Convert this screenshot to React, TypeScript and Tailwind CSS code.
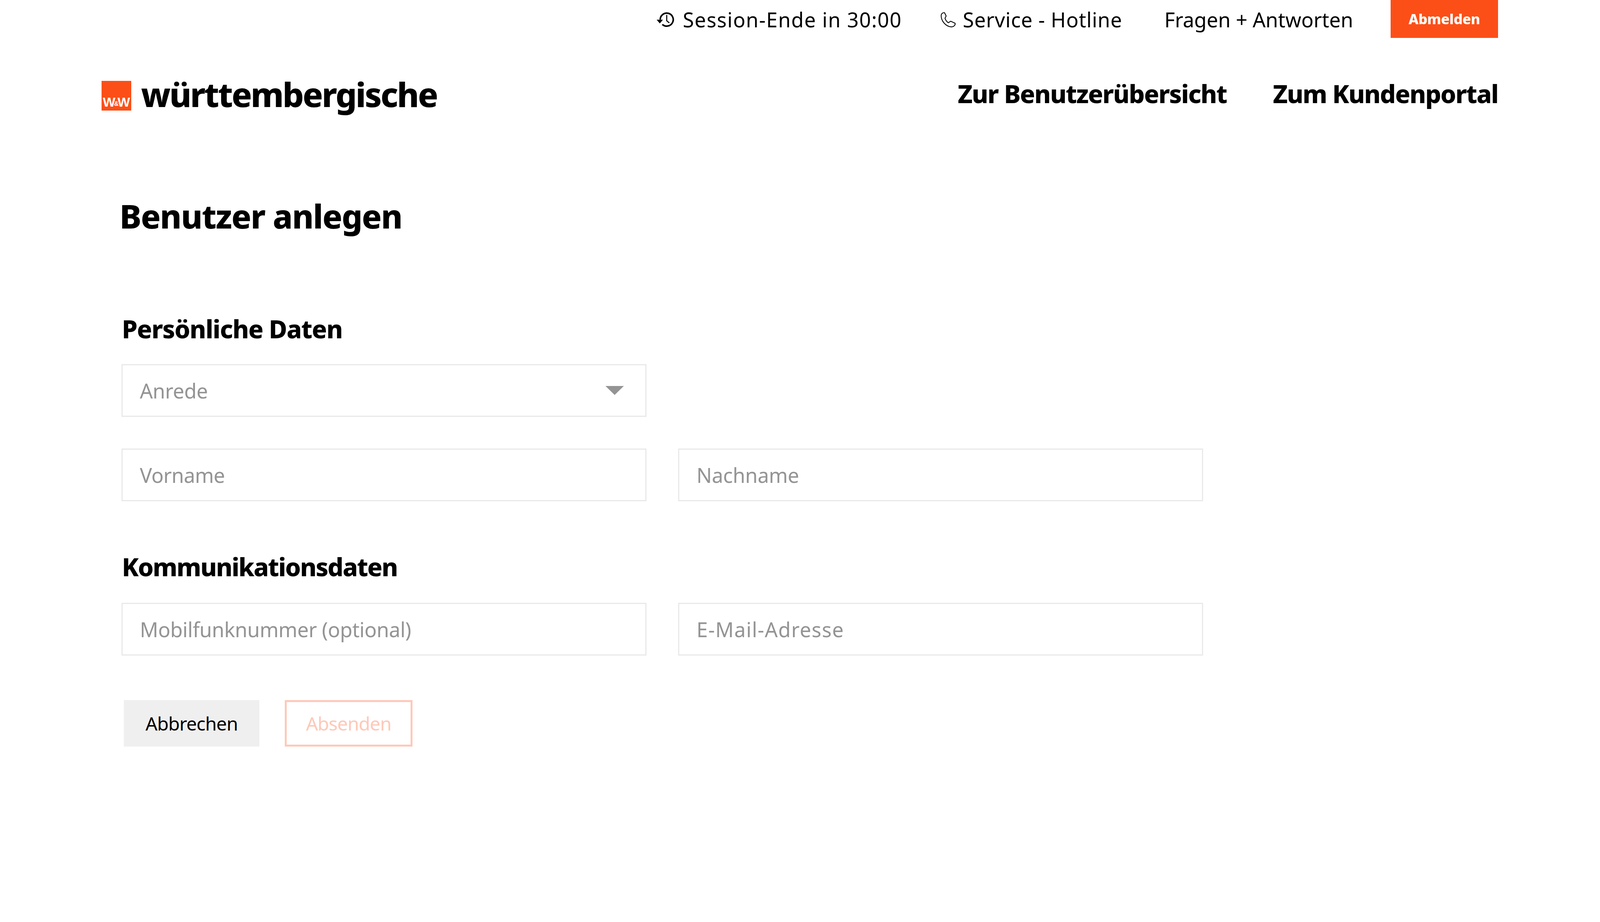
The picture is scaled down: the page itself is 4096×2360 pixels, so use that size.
import React from 'react';

const sans = "font-['Noto_Sans','Open_Sans',sans-serif]";

const HistoryIcon = () => (
  <svg width="49" height="45" viewBox="10 12 54 50" fill="none" className="shrink-0">
    <path d="M22.200 36.700a18.500 18.500 0 1 1 6 13.600" stroke="#000" strokeWidth="4.500" />
    <path d="M12 37h18l-9 10.500z" fill="#000" />
    <path d="M40.700 23.500V40l7.300 6" stroke="#000" strokeWidth="3" />
  </svg>
);

const PhoneIcon = () => (
  <svg width="41" height="41" viewBox="40 40 135 135" fill="none" className="shrink-0">
    <path
      d="M48 68C50 55 65 45 76 48L90 76 80 95C85 110 95 125 108 133L128 120 165 137C170 150 155 168 135 168 85 165 45 115 48 68Z"
      stroke="#000"
      strokeWidth="7"
      strokeLinejoin="round"
    />
  </svg>
);

const Field = ({ label, className = '' }: { label: string; className?: string }) => (
  <div className={`w-[1344px] h-[135px] border-[3px] border-[#e9e9e9] flex items-center pl-[44px] text-[52px] text-[#949494] ${className}`}>
    {label}
  </div>
);

export default function App() {
  return (
    <div className={`w-[4096px] h-[2360px] bg-white text-black overflow-hidden ${sans}`}>
      <div className="flex justify-end items-start pr-[261px] h-[97px] text-[52px] leading-[72px]">
        <div className="flex items-center gap-[20px] pt-[14px] mr-[98px]">
          <HistoryIcon />
          <span className="tracking-[1.500px]">Session-Ende in 30:00</span>
        </div>
        <div className="flex items-center gap-[17px] pt-[14px] mr-[108px]">
          <PhoneIcon />
          <span className="tracking-[0.800px]">Service - Hotline</span>
        </div>
        <div className="pt-[14px] mr-[96px] tracking-[-0.100px]">Fragen + Antworten</div>
        <div className="w-[275px] h-[97px] bg-[#fc4f17] text-white text-[36px] font-[850] tracking-[-0.300px] flex items-center justify-center">
          Abmelden
        </div>
      </div>

      <div className="flex items-center justify-between pl-[260px] pr-[261px] mt-[110px] h-[76px]">
        <div className="flex items-center gap-[25px]">
          <div className="w-[76px] h-[76px] bg-[#fc4f17] flex items-end justify-center pb-[9px] font-['Liberation_Sans',sans-serif] font-bold text-white">
            <span className="text-[34px] leading-[26px]">W</span>
            <span className="text-[16px] leading-[16px] -mx-[3px]">&amp;</span>
            <span className="text-[34px] leading-[26px]">W</span>
          </div>
          <span className="text-[86px] leading-[76px] font-[850] tracking-[-3.300px] pb-[8px]">württembergische</span>
        </div>
        <div className="flex gap-[118px] text-[64px] leading-[76px] font-[850] tracking-[-1.900px] pb-[10px]">
          <span>Zur Benutzerübersicht</span>
          <span>Zum Kundenportal</span>
        </div>
      </div>

      <div className="pl-[311px]">
        <h1 className="mt-[210px] -ml-[5px] text-[84px] leading-[120px] font-[850] tracking-[-1.800px]">Benutzer anlegen</h1>
        <h2 className="mt-[189px] ml-[1px] text-[64px] leading-[80px] font-[850] tracking-[-1.500px]">Persönliche Daten</h2>
        <div className="mt-[50px] w-[1344px] h-[135px] border-[3px] border-[#e9e9e9] flex items-center justify-between pl-[44px] pr-[55px] text-[52px] text-[#949494]">
          <span className="tracking-[-0.400px]">Anrede</span>
          <svg width="47" height="23" viewBox="0 0 47 23">
            <path d="M0 0h47L23.500 23z" fill="#949494" />
          </svg>
        </div>
        <div className="mt-[81px] flex gap-[81px]">
          <Field label="Vorname" className="tracking-[-0.700px]" />
          <Field label="Nachname" className="tracking-[-0.300px]" />
        </div>
        <h2 className="mt-[128px] ml-[1px] text-[64px] leading-[80px] font-[850] tracking-[-2.200px]">Kommunikationsdaten</h2>
        <div className="mt-[52px] flex gap-[81px]">
          <Field label="Mobilfunknummer (optional)" className="tracking-[-0.450px]" />
          <Field label="E-Mail-Adresse" className="tracking-[1.300px]" />
        </div>
        <div className="mt-[114px] ml-[6px] flex gap-[65px] text-[48px] tracking-[-1px]">
          <button className="w-[347px] h-[119px] bg-[#efefef]">Abbrechen</button>
          <button className="w-[327px] h-[119px] border-[5px] border-[#fec9b9] text-[#fec9b9]">Absenden</button>
        </div>
      </div>
    </div>
  );
}
